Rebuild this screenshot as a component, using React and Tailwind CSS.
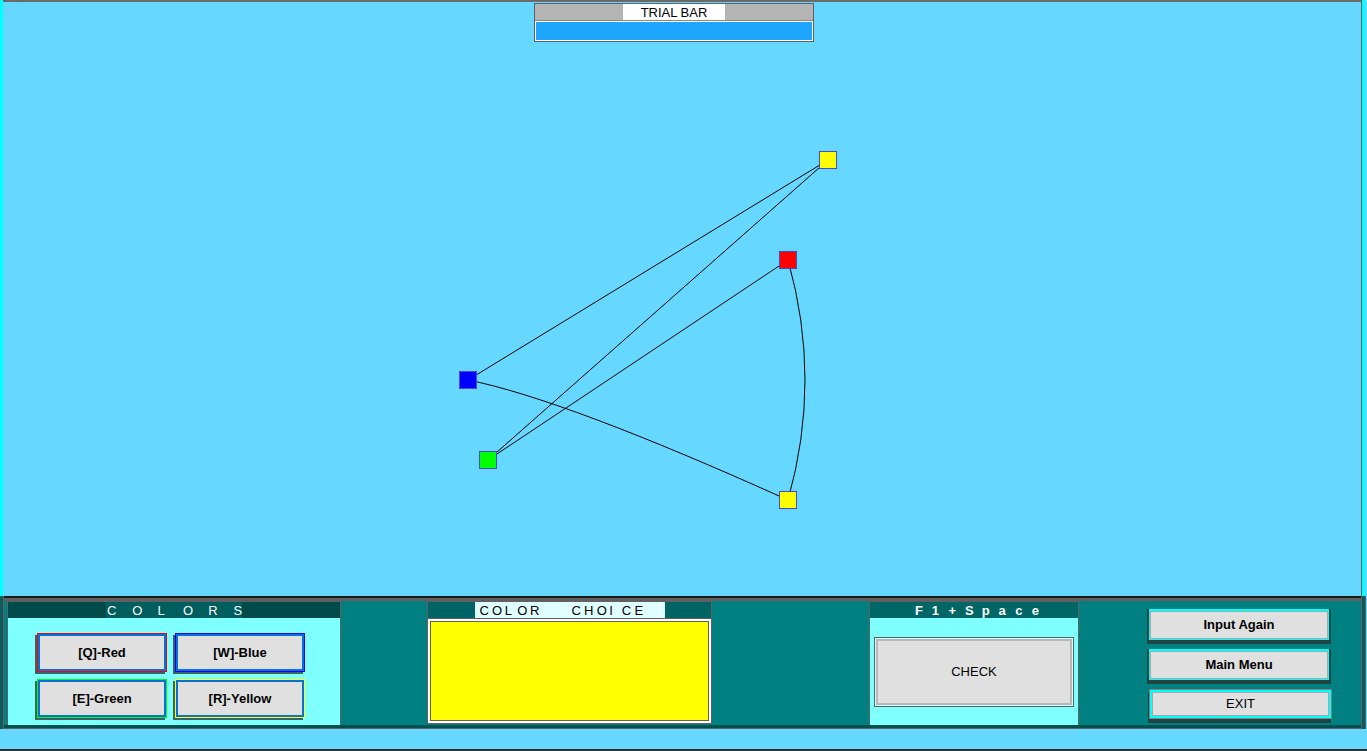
// Graph colouring trial screen: canvas with nodes on top, control strip below.

const FONT = { fontFamily: '"Liberation Sans", Arial, sans-serif' };

const NODES = [
  { id: "yellowTop", x: 828, y: 160, fill: "#ffff00" },
  { id: "red", x: 788, y: 260, fill: "#ff0000" },
  { id: "blue", x: 468, y: 380, fill: "#0000ff" },
  { id: "green", x: 488, y: 460, fill: "#00ff00" },
  { id: "yellowBottom", x: 788, y: 500, fill: "#ffff00" },
];

const EDGES = [
  "M468 380 L828 160",
  "M488 460 L828 160",
  "M488 460 L788 260",
  "M468 380 Q564 399 788 500",
  "M788 260 Q822 380 788 500",
];

function Graph() {
  return (
    <svg
      className="absolute inset-0 pointer-events-none"
      width="1367"
      height="596"
      viewBox="0 0 1367 596"
    >
      {EDGES.map((d) => (
        <path key={d} d={d} fill="none" stroke="#000" strokeWidth="1" />
      ))}
      {NODES.map((n) => (
        <rect
          key={n.id}
          x={n.x - 8.5}
          y={n.y - 8.5}
          width="17"
          height="17"
          fill={n.fill}
          stroke="#4a4ad8"
          strokeWidth="1"
        />
      ))}
    </svg>
  );
}

function TrialBar() {
  return (
    <div className="ml-[531px] mt-[1px] w-[280px] border border-[#606060] bg-[#b4b4b4]">
      <div className="h-[17px] flex justify-center border-b border-[#8a8a8a]">
        <div className="w-[102px] h-[16px] bg-white flex items-center justify-center text-[13px] leading-none text-black">
          TRIAL BAR
        </div>
      </div>
      <div className="h-[20px] border border-white bg-[#1ea6ff]" />
    </div>
  );
}

function Letters({ chars, cell, className }) {
  return (
    <div className={"flex " + className}>
      {chars.map((c, i) => (
        <span key={i} className={cell + " shrink-0"}>
          {c}
        </span>
      ))}
    </div>
  );
}

const COLOR_BUTTONS = [
  { label: "[Q]-Red", edge: "border-[#ff0000]" },
  { label: "[W]-Blue", edge: "border-[#0000ff]" },
  { label: "[E]-Green", edge: "border-[#00ff00]" },
  { label: "[R]-Yellow", edge: "border-[#ffff00]" },
];

function ColorButton({ label, edge }) {
  return (
    <div className="ml-[2px] w-[130px] h-[39px] shadow-[-2px_2px_0_#3d6262]">
      <div className={"h-full border bg-[#0a6fd6] p-[2px] " + edge}>
        <div className="h-full bg-[#e0e0e0] flex items-center justify-center text-[13px] font-bold text-black">
          {label}
        </div>
      </div>
    </div>
  );
}

function ColorsPanel() {
  return (
    <div className="ml-[3px] w-[334px] h-full border-x border-t border-[#606060] flex flex-col">
      <div className="h-[16px] bg-[#004a4a] flex justify-center">
        <div className="bg-[#005e5e] w-[136px] pl-[1px] flex items-center">
          <Letters
            chars={["C", "O", "L", "O", "R", "S"]}
            cell="w-[25.3px]"
            className="text-[13px] leading-none text-white"
          />
        </div>
      </div>
      <div className="flex-1 bg-[#80ffff] pt-[15px] pl-[27px]">
        <div className="grid grid-cols-[132px_132px] gap-x-[6px] gap-y-[7px]">
          {COLOR_BUTTONS.map((b) => (
            <ColorButton key={b.label} {...b} />
          ))}
        </div>
      </div>
    </div>
  );
}

function ColorChoice() {
  return (
    <div className="ml-[86px] w-[285px] h-[123px] border border-[#606060] flex flex-col">
      <div className="h-[17px] bg-[#006464] border-b border-[#606060] flex justify-center">
        <div className="w-[190px] bg-[#e0ffff] pl-[5px] flex items-center text-[13px] leading-none text-black">
          <Letters chars={["C", "O", "L", "O", "R"]} cell="w-[12.6px]" className="" />
          <Letters
            chars={["C", "H", "O", "I", "C", "E"]}
            cell="w-[12.6px]"
            className="ml-[29px]"
          />
        </div>
      </div>
      <div className="flex-1 border-2 border-white">
        <div className="h-full border border-[#606060] bg-[#ffff00]" />
      </div>
    </div>
  );
}

function CheckPanel() {
  return (
    <div className="ml-[157px] w-[210px] h-full border-x border-t border-[#606060] flex flex-col">
      <div className="h-[16px] bg-[#006666] flex items-center pl-[45px]">
        <Letters
          chars={["F", "1", "+", "S", "p", "a", "c", "e"]}
          cell="w-[16.7px]"
          className="text-[13px] font-bold leading-none text-white"
        />
      </div>
      <div className="flex-1 bg-[#80ffff] pt-[19px] pl-[4px]">
        <div className="w-[200px] h-[70px] border border-[#606060] bg-[#c8ffff] p-[1px]">
          <div className="h-full border-2 border-[#b8b8b8] bg-[#e0e0e0] flex items-center justify-center text-[13px] text-black">
            CHECK
          </div>
        </div>
      </div>
    </div>
  );
}

function MenuButton({ label, bold, focused }) {
  if (focused) {
    return (
      <div className="w-[183px] h-[30px] border border-[#808080] shadow-[-1px_4px_0_#1f4444]">
        <div className="h-full border-2 border-[#00ffff]">
          <div className="h-full border border-[#a8a8a8] bg-[#e0e0e0] flex items-center justify-center text-[13px] text-black">
            {label}
          </div>
        </div>
      </div>
    );
  }
  return (
    <div className="w-[180px] h-[31px] border border-t-2 border-[#00ffff] shadow-[0_2px_0_2px_#1f4444]">
      <div
        className={
          "h-full border border-[#a8a8a8] bg-[#e0e0e0] flex items-center justify-center text-[13px] text-black " +
          (bold ? "font-bold" : "")
        }
      >
        {label}
      </div>
    </div>
  );
}

function MenuButtons() {
  return (
    <div className="ml-[70px] pt-[8px] flex flex-col gap-[9px]">
      <MenuButton label="Input Again" bold />
      <MenuButton label="Main Menu" bold />
      <MenuButton label="EXIT" focused />
    </div>
  );
}

export default function App() {
  return (
    <div className="w-[1367px] h-[751px] bg-[#66d8ff] flex flex-col overflow-hidden" style={FONT}>
      {/* canvas */}
      <div className="relative h-[596px] flex shrink-0">
        <div className="w-[3px] bg-[#00ffff]" />
        <div className="flex-1 border-t-2 border-[#6a6a6a]">
          <TrialBar />
        </div>
        <div className="w-px bg-[#606060]" />
        <div className="w-[3px] bg-[#00ffff]" />
        <div className="w-[2px] bg-[#66d8ff]" />
        <Graph />
      </div>

      {/* control strip */}
      <div className="h-[133px] flex shrink-0">
        <div className="w-[3px] bg-[#0b5c5c]" />
        <div className="flex-1 flex flex-col border-x border-[#606060]">
          <div className="h-[2px] bg-[#1a1a1a]" />
          <div className="h-[3px] bg-[#606060]" />
          <div className="h-[124px] bg-[#008080] flex items-start">
            <ColorsPanel />
            <ColorChoice />
            <CheckPanel />
            <MenuButtons />
          </div>
          <div className="h-[3px] bg-[#005050]" />
          <div className="h-px bg-[#606060]" />
        </div>
        <div className="w-[3px] bg-[#0b5c5c]" />
        <div className="w-px bg-[#606060]" />
        <div className="w-px bg-[#66d8ff]" />
      </div>

      <div className="h-[20px] shrink-0" />
      <div className="h-[2px] bg-[#303030] shrink-0" />
    </div>
  );
}
